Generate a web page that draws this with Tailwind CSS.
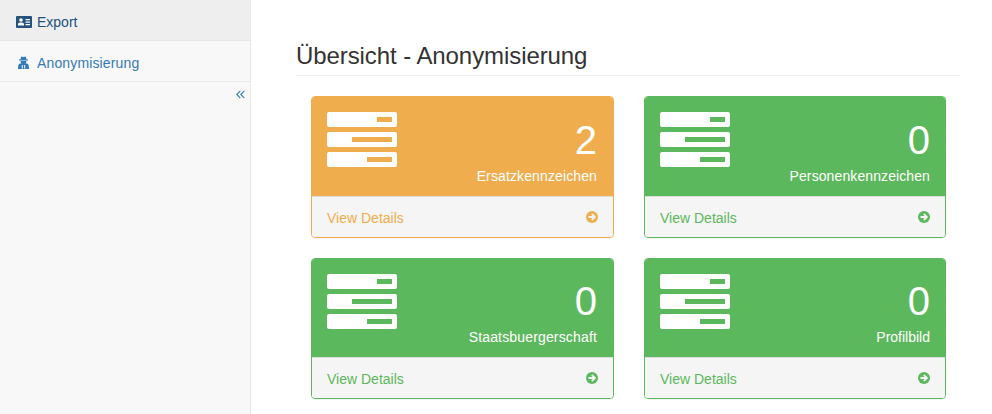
<!DOCTYPE html>
<html lang="en">
<head>
  <meta charset="UTF-8" />
  <title>Übersicht - Anonymisierung</title>
  <script src="https://cdn.jsdelivr.net/npm/@tailwindcss/browser@4"></script>
</head>
<body class="bg-white font-['Liberation_Sans',Arial,sans-serif] text-[14px] leading-[20px] text-[#333]">
  <div class="flex h-[414px] overflow-hidden">

    <!-- sidebar -->
    <aside class="w-[251px] shrink-0 bg-[#f8f8f8] border-r border-[#e7e7e7]">
      <a class="flex items-center h-[41px] pl-[16px] pt-[3px] bg-[#eeeeee] border-b border-[#e7e7e7] text-[#23527c]">
        <svg class="w-[16px] h-[12px] mr-[5px]" viewBox="0 0 16 12">
          <path fill="#23527c" d="M1 0h14a1 1 0 0 1 1 1v10a1 1 0 0 1-1 1H1a1 1 0 0 1-1-1V1a1 1 0 0 1 1-1z"/>
          <circle cx="5" cy="4" r="1.8" fill="#fff"/>
          <path fill="#fff" d="M2 9.500V8a2 2 0 0 1 2-1.600h2A2 2 0 0 1 8 8v1.500zM9.500 3h4.500v1.200H9.500zM9.500 5.500h4.500v1.200H9.500zM9.500 8h4.500v1.200H9.500z"/>
        </svg>
        Export
      </a>
      <a class="flex items-center h-[41px] pl-[18px] pt-[3px] border-b border-[#e7e7e7] text-[#337ab7] tracking-[0.14px]">
        <svg class="w-[11px] h-[13px] mr-[8px]" viewBox="0 0 11 13">
          <path fill="#337ab7" d="M3.200 0.500 5.500 1 7.800 0.500 8.600 3.500H10V4.500H1V3.500H2.400zM2.500 5H8.500A3 3 0 0 1 2.500 5zM2 7.600H9C10.300 8 11 9.500 11 13H0C0 9.500 .7 8 2 7.600z"/>
          <path fill="#f8f8f8" d="M3.800 9h1v3.500h-1zM6.200 9h1v3.500h-1z"/>
        </svg>
        Anonymisierung
      </a>
      <div class="flex justify-end pr-[5px] pt-[8px]">
        <svg class="w-[9px] h-[9px]" viewBox="0 0 9 9" fill="none" stroke="#337ab7" stroke-width="1.100">
          <path d="M4.300 .8 .8 4.500l3.500 3.700M8.300 .8 4.800 4.500l3.500 3.700"/>
        </svg>
      </div>
    </aside>

    <!-- main -->
    <main class="w-[664px] ml-[45px]">
      <h1 class="mt-[41px] h-[29px] pb-[5px] border-b border-[#eeeeee] text-[24px] leading-[29px] font-normal text-[#333] box-content tracking-[-0.08px]">Übersicht - Anonymisierung</h1>

      <div class="grid grid-cols-[303px_302px] gap-x-[30px] gap-y-[20px] pl-[15px] mt-[20px]">

        <div class="h-[142px] flex flex-col rounded-[4px] border border-[#f0ad4e] shadow-[0_1px_1px_rgba(0,0,0,0.05)] overflow-hidden">
          <div class="h-[99px] flex justify-between bg-[#f0ad4e] pl-[15px] pr-[16px] pt-[15px] text-white">
            <svg class="w-[70px] h-[55px]" viewBox="0 0 70 55">
              <rect width="70" height="15" y="0" rx="2" fill="#fff"/><rect width="70" height="15" y="20" rx="2" fill="#fff"/><rect width="70" height="15" y="40" rx="2" fill="#fff"/>
              <rect x="50" y="5" width="15" height="5" fill="#f0ad4e"/><rect x="25" y="25" width="40" height="5" fill="#f0ad4e"/><rect x="40" y="45" width="25" height="5" fill="#f0ad4e"/>
            </svg>
            <div class="text-right">
              <div class="text-[40px] leading-[44px] mt-[6px]">2</div>
              <div class="mt-[4px] tracking-[0.12px]">Ersatzkennzeichen</div>
            </div>
          </div>
          <div class="flex-1 flex items-center justify-between bg-[#f5f5f5] border-t border-[#dddddd] px-[15px] text-[#f0ad4e]">
            <span class="pt-[2px]">View Details</span>
            <svg class="w-[12px] h-[12px]" viewBox="0 0 12 12">
              <circle cx="6" cy="6" r="6" fill="#f0ad4e"/>
              <path fill="none" stroke="#f5f5f5" stroke-width="1.800" d="M2.500 6h6M5.800 2.900 8.900 6 5.800 9.100"/>
            </svg>
          </div>
        </div>

        <div class="h-[142px] flex flex-col rounded-[4px] border border-[#5cb85c] shadow-[0_1px_1px_rgba(0,0,0,0.05)] overflow-hidden">
          <div class="h-[99px] flex justify-between bg-[#5cb85c] px-[15px] pt-[15px] text-white">
            <svg class="w-[70px] h-[55px]" viewBox="0 0 70 55">
              <rect width="70" height="15" y="0" rx="2" fill="#fff"/><rect width="70" height="15" y="20" rx="2" fill="#fff"/><rect width="70" height="15" y="40" rx="2" fill="#fff"/>
              <rect x="50" y="5" width="15" height="5" fill="#5cb85c"/><rect x="25" y="25" width="40" height="5" fill="#5cb85c"/><rect x="40" y="45" width="25" height="5" fill="#5cb85c"/>
            </svg>
            <div class="text-right">
              <div class="text-[40px] leading-[44px] mt-[6px]">0</div>
              <div class="mt-[4px] tracking-[0.1px]">Personenkennzeichen</div>
            </div>
          </div>
          <div class="flex-1 flex items-center justify-between bg-[#f5f5f5] border-t border-[#dddddd] px-[15px] text-[#5cb85c]">
            <span class="pt-[2px]">View Details</span>
            <svg class="w-[12px] h-[12px]" viewBox="0 0 12 12">
              <circle cx="6" cy="6" r="6" fill="#5cb85c"/>
              <path fill="none" stroke="#f5f5f5" stroke-width="1.800" d="M2.500 6h6M5.800 2.900 8.900 6 5.800 9.100"/>
            </svg>
          </div>
        </div>

        <div class="h-[141px] flex flex-col rounded-[4px] border border-[#5cb85c] shadow-[0_1px_1px_rgba(0,0,0,0.05)] overflow-hidden">
          <div class="h-[98px] flex justify-between bg-[#5cb85c] pl-[15px] pr-[16px] pt-[15px] text-white">
            <svg class="w-[70px] h-[55px]" viewBox="0 0 70 55">
              <rect width="70" height="15" y="0" rx="2" fill="#fff"/><rect width="70" height="15" y="20" rx="2" fill="#fff"/><rect width="70" height="15" y="40" rx="2" fill="#fff"/>
              <rect x="50" y="5" width="15" height="5" fill="#5cb85c"/><rect x="25" y="25" width="40" height="5" fill="#5cb85c"/><rect x="40" y="45" width="25" height="5" fill="#5cb85c"/>
            </svg>
            <div class="text-right">
              <div class="text-[40px] leading-[44px] mt-[5px]">0</div>
              <div class="mt-[4px] tracking-[0.16px]">Staatsbuergerschaft</div>
            </div>
          </div>
          <div class="flex-1 flex items-center justify-between bg-[#f5f5f5] border-t border-[#dddddd] px-[15px] text-[#5cb85c]">
            <span class="pt-[2px]">View Details</span>
            <svg class="w-[12px] h-[12px]" viewBox="0 0 12 12">
              <circle cx="6" cy="6" r="6" fill="#5cb85c"/>
              <path fill="none" stroke="#f5f5f5" stroke-width="1.800" d="M2.500 6h6M5.800 2.900 8.900 6 5.800 9.100"/>
            </svg>
          </div>
        </div>

        <div class="h-[141px] flex flex-col rounded-[4px] border border-[#5cb85c] shadow-[0_1px_1px_rgba(0,0,0,0.05)] overflow-hidden">
          <div class="h-[98px] flex justify-between bg-[#5cb85c] px-[15px] pt-[15px] text-white">
            <svg class="w-[70px] h-[55px]" viewBox="0 0 70 55">
              <rect width="70" height="15" y="0" rx="2" fill="#fff"/><rect width="70" height="15" y="20" rx="2" fill="#fff"/><rect width="70" height="15" y="40" rx="2" fill="#fff"/>
              <rect x="50" y="5" width="15" height="5" fill="#5cb85c"/><rect x="25" y="25" width="40" height="5" fill="#5cb85c"/><rect x="40" y="45" width="25" height="5" fill="#5cb85c"/>
            </svg>
            <div class="text-right">
              <div class="text-[40px] leading-[44px] mt-[5px]">0</div>
              <div class="mt-[4px]">Profilbild</div>
            </div>
          </div>
          <div class="flex-1 flex items-center justify-between bg-[#f5f5f5] border-t border-[#dddddd] px-[15px] text-[#5cb85c]">
            <span class="pt-[2px]">View Details</span>
            <svg class="w-[12px] h-[12px]" viewBox="0 0 12 12">
              <circle cx="6" cy="6" r="6" fill="#5cb85c"/>
              <path fill="none" stroke="#f5f5f5" stroke-width="1.800" d="M2.500 6h6M5.800 2.900 8.900 6 5.800 9.100"/>
            </svg>
          </div>
        </div>

      </div>
    </main>
  </div>
</body>
</html>
